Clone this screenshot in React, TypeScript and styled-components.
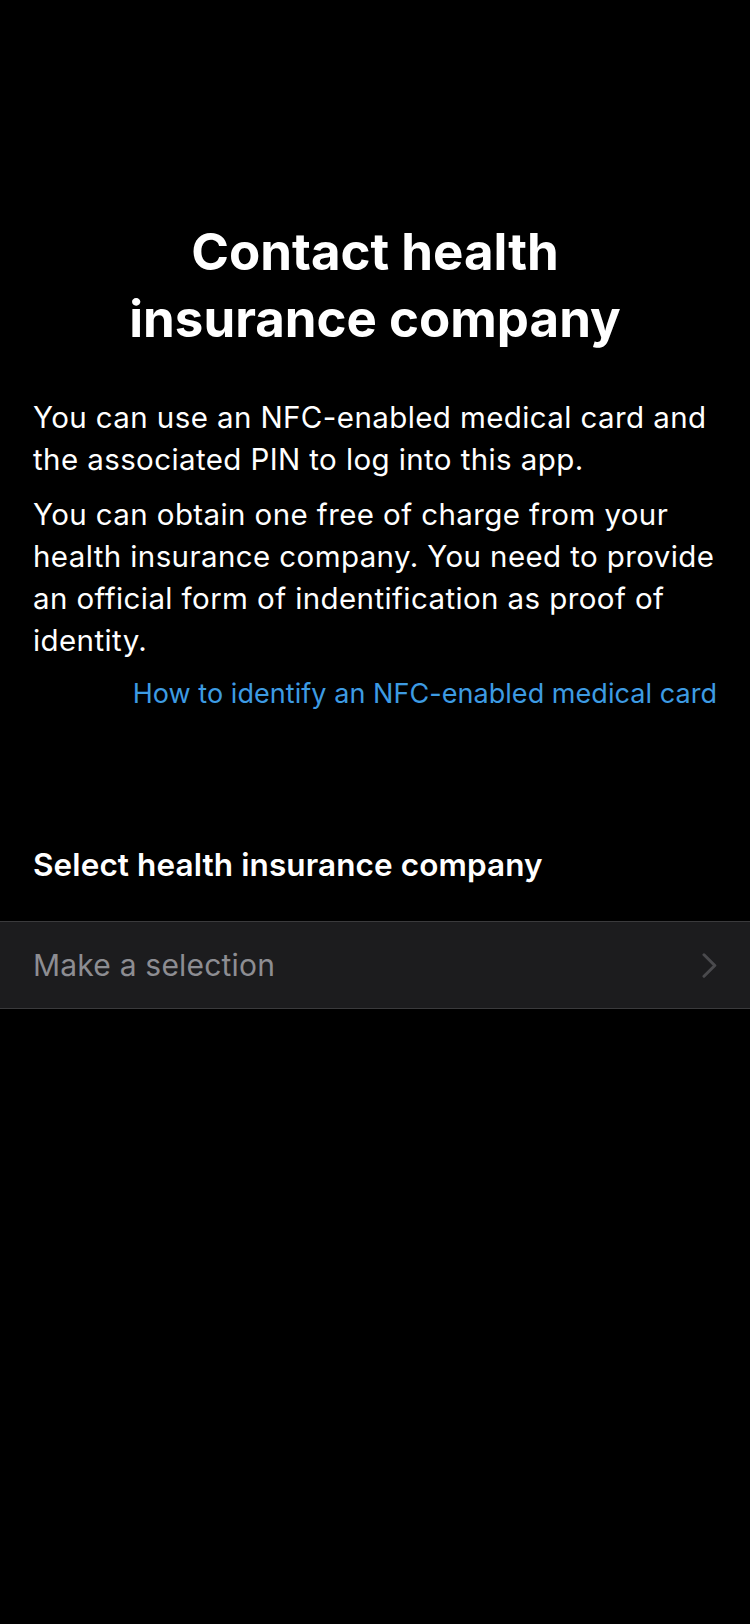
import React from "react";
import styled, { createGlobalStyle } from "styled-components";

const GlobalStyle = createGlobalStyle`
  html, body {
    margin: 0;
    padding: 0;
    background: #000000;
  }
  body {
    font-family: Inter, "Noto Sans", "Liberation Sans", sans-serif;
    -webkit-font-smoothing: antialiased;
  }
`;

const Screen = styled.main`
  width: 750px;
  min-height: 1624px;
  background: #000000;
  color: #ffffff;
  display: flex;
  flex-direction: column;
  padding-top: 218px;
  box-sizing: border-box;
`;

const Title = styled.h1`
  margin: 0 0 44px;
  padding: 0 110px;
  text-align: center;
  font-size: 51px;
  line-height: 67px;
  font-weight: 700;
  letter-spacing: 0;
`;

const Body = styled.section`
  padding: 0 31px 0 33px;
  display: flex;
  flex-direction: column;
  gap: 13px;
`;

const Paragraph = styled.p`
  margin: 0;
  font-size: 29.5px;
  line-height: 42px;
  font-weight: 400;
  letter-spacing: 0.4px;
  color: #ffffff;
`;

const LinkRow = styled.div`
  padding: 0 33px;
  margin-top: 12px;
  display: flex;
  justify-content: flex-end;
`;

const InfoLink = styled.a`
  font-size: 27px;
  line-height: 42px;
  letter-spacing: 0.05px;
  color: #3d9be3;
  text-decoration: none;
  cursor: pointer;
`;

const SectionHeader = styled.h2`
  margin: 131px 0 37px;
  padding: 0 33px;
  font-size: 31.5px;
  line-height: 38px;
  font-weight: 600;
  letter-spacing: 0.1px;
`;

const SelectRow = styled.button`
  display: flex;
  align-items: center;
  justify-content: space-between;
  width: 100%;
  height: 88px;
  padding: 0 33px;
  margin: 0;
  box-sizing: border-box;
  background: #1c1c1e;
  border: none;
  border-top: 1px solid #3a3a3c;
  border-bottom: 1px solid #3a3a3c;
  font-family: inherit;
  cursor: pointer;
`;

const Placeholder = styled.span`
  font-size: 30px;
  font-weight: 400;
  letter-spacing: 0.2px;
  color: #8d8d92;
`;

const Chevron = styled.svg`
  width: 15px;
  height: 25px;
  flex: none;
`;

export default function App() {
  return (
    <>
      <GlobalStyle />
      <Screen>
        <Title>Contact health insurance company</Title>
        <Body>
          <Paragraph>
            You can use an NFC-enabled medical card and the associated PIN to log into this app.
          </Paragraph>
          <Paragraph>
            You can obtain one free of charge from your health insurance company. You need to
            provide an official form of indentification as proof of identity.
          </Paragraph>
        </Body>
        <LinkRow>
          <InfoLink>How to identify an NFC-enabled medical card</InfoLink>
        </LinkRow>
        <SectionHeader>Select health insurance company</SectionHeader>
        <SelectRow type="button">
          <Placeholder>Make a selection</Placeholder>
          <Chevron viewBox="0 0 15 25" aria-hidden="true">
            <path
              d="M2 1.8 L12.8 12.5 L2 23.2"
              fill="none"
              stroke="#4a4a4d"
              strokeWidth="3"
              strokeLinecap="round"
              strokeLinejoin="round"
            />
          </Chevron>
        </SelectRow>
      </Screen>
    </>
  );
}
